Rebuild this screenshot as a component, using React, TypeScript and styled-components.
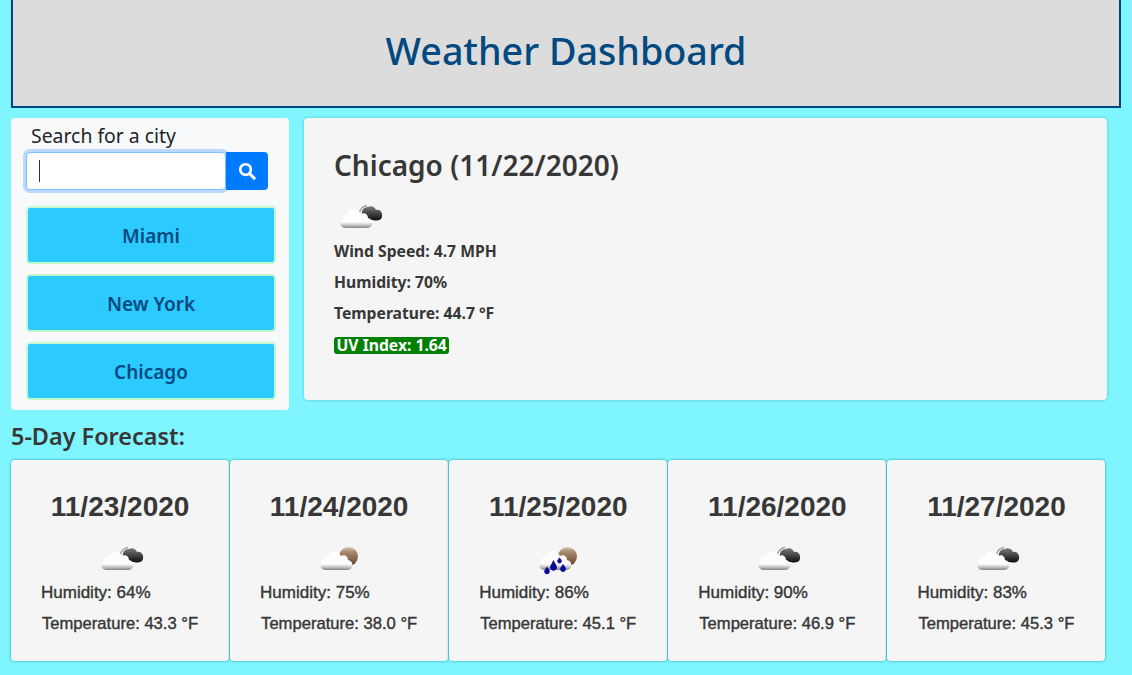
import styled, { createGlobalStyle } from 'styled-components'

const GlobalStyle = createGlobalStyle`
  html, body {
    margin: 0;
    padding: 0;
    background: #7ff5ff;
    color: #373737;
    font-family: "Noto Sans", "Open Sans", sans-serif;
    overflow: hidden;
  }
`

type IconKind = 'cloudy' | 'sun' | 'rain'

const WeatherIcon = ({ kind, uid }: { kind: IconKind; uid: string }) => {
  return (
    <svg width="50" height="50" viewBox="0 0 50 50">
      <defs>
        <linearGradient id={`${uid}-cloud`} x1="0" y1="0" x2="0" y2="1">
          <stop offset="0" stopColor="#ffffff" />
          <stop offset="0.68" stopColor="#fdfdfd" />
          <stop offset="0.84" stopColor="#c8c8c8" />
          <stop offset="1" stopColor="#828282" />
        </linearGradient>
        <linearGradient id={`${uid}-dark`} x1="0" y1="0" x2="0" y2="1">
          <stop offset="0" stopColor="#7a7a7a" />
          <stop offset="1" stopColor="#0e0e0e" />
        </linearGradient>
        <linearGradient id={`${uid}-sun`} x1="0" y1="0" x2="0" y2="1">
          <stop offset="0" stopColor="#d9c8b6" />
          <stop offset="0.25" stopColor="#a88a6e" />
          <stop offset="0.6" stopColor="#8a6a4e" />
          <stop offset="1" stopColor="#5f4128" />
        </linearGradient>
      </defs>
      {kind === 'cloudy' && (
        <>
          <path
            d="M28 22 C27 16 29 12 34 12 C37 10 41 12 42 15 C46 14 49 18 48 22 C47 26 42 26 39 25 L32 25 Z"
            fill={`url(#${uid}-dark)`}
          />
          <path d="M25 19 C26 14 29 11 33 10.500" fill="none" stroke="#a0a0a0" strokeWidth="1.400" />
        </>
      )}
      {kind !== 'cloudy' && <circle cx="34.500" cy="19.500" r="9.500" fill={`url(#${uid}-sun)`} />}
      <path
        d="M12 33 C6 33 5 27 8 25 C8 21 11 19 14 20 C15 13 24 12 27 19 C30 17 34 19 34 23 C38 24 39 27 38 30 C37 32 35 33 33 33 Z"
        fill={`url(#${uid}-cloud)`}
      />
      {kind === 'rain' && (
        <g fill="#0a0a9a">
          <path d="M20.500 23 L23.400 28.500 A3.400 3.400 0 1 1 17.600 28.500 Z" />
          <path d="M14 29.500 L16.400 33 A2.800 2.800 0 1 1 11.600 33 Z" />
          <path d="M26.500 20.500 L28.500 23 A2.300 2.300 0 1 1 24.500 23 Z" />
          <path d="M30 27 L32.500 30.500 A2.900 2.900 0 1 1 27.500 30.500 Z" />
        </g>
      )}
    </svg>
  )
}

const App = () => {
  const cities = ['Miami', 'New York', 'Chicago']
  const days = [
    { date: '11/23/2020', icon: 'cloudy' as IconKind, humidity: '64%', temp: '43.3 °F' },
    { date: '11/24/2020', icon: 'sun' as IconKind, humidity: '75%', temp: '38.0 °F' },
    { date: '11/25/2020', icon: 'rain' as IconKind, humidity: '86%', temp: '45.1 °F' },
    { date: '11/26/2020', icon: 'cloudy' as IconKind, humidity: '90%', temp: '46.9 °F' },
    { date: '11/27/2020', icon: 'cloudy' as IconKind, humidity: '83%', temp: '45.3 °F' },
  ]
  return (
    <Page>
      <GlobalStyle />
      <Header>
        <Title>Weather Dashboard</Title>
      </Header>
      <TopRow>
        <SidePanel>
          <SearchLabel>Search for a city</SearchLabel>
          <SearchRow>
            <SearchInput>
              <Caret />
            </SearchInput>
            <SearchButton aria-label="Search">
              <svg width="18" height="18" viewBox="0 0 16 16" fill="none" stroke="#fff">
                <circle cx="6.700" cy="6.700" r="4.700" strokeWidth="2.400" />
                <path d="M10.300 10.300 L14.300 14.300" strokeWidth="2.800" strokeLinecap="round" />
              </svg>
            </SearchButton>
          </SearchRow>
          <CityList>
            {cities.map((city) => (
              <CityButton key={city}>{city}</CityButton>
            ))}
          </CityList>
        </SidePanel>
        <CurrentPanel>
          <CityTitle>Chicago (11/22/2020)</CityTitle>
          <CurrentIcon>
            <WeatherIcon kind="cloudy" uid="current" />
          </CurrentIcon>
          <Stat>Wind Speed: 4.7 MPH</Stat>
          <Stat>Humidity: 70%</Stat>
          <Stat>Temperature: 44.7 °F</Stat>
          <UvBadge>UV Index: 1.64</UvBadge>
        </CurrentPanel>
      </TopRow>
      <ForecastTitle>5-Day Forecast:</ForecastTitle>
      <ForecastRow>
        {days.map((day) => (
          <DayCard key={day.date}>
            <DayDate>{day.date}</DayDate>
            <DayIcon>
              <WeatherIcon kind={day.icon} uid={day.date} />
            </DayIcon>
            <DayHumidity>Humidity: {day.humidity}</DayHumidity>
            <DayTemp>Temperature: {day.temp}</DayTemp>
          </DayCard>
        ))}
      </ForecastRow>
    </Page>
  )
}

const Page = styled.div`
  width: 1132px;
  height: 675px;
  padding: 0 11px;
  box-sizing: border-box;
`
const Header = styled.header`
  width: 1110px;
  height: 108px;
  box-sizing: border-box;
  background: #dcdcdc;
  border: 2px solid #03467f;
  border-top: none;
  display: flex;
  align-items: center;
  justify-content: center;
  padding-bottom: 5px;
`
const Title = styled.h1`
  margin: 0;
  font-size: 37.7px;
  font-weight: 500;
  color: #03497f;
`
const TopRow = styled.div`
  display: flex;
  align-items: flex-start;
  gap: 15px;
  margin-top: 10px;
`
const SidePanel = styled.aside`
  width: 278px;
  height: 292px;
  box-sizing: border-box;
  background: #f8f9fa;
  border-radius: 4px;
  padding: 5px 14px 0 15px;
`
const SearchLabel = styled.div`
  font-size: 19.4px;
  line-height: 26px;
  color: #212529;
  padding-left: 5px;
`
const SearchRow = styled.div`
  display: flex;
  margin-top: 3px;
`
const SearchInput = styled.div`
  width: 200px;
  height: 38px;
  box-sizing: border-box;
  background: #fff;
  border: 1px solid #80bdff;
  border-radius: 4px;
  box-shadow: 0 0 0 3px rgba(0, 123, 255, 0.25);
  display: flex;
  align-items: center;
  padding-left: 12px;
`
const Caret = styled.span`
  width: 1px;
  height: 22px;
  background: #333;
`
const SearchButton = styled.button`
  width: 42px;
  height: 38px;
  border: none;
  padding: 0;
  background: #007bff;
  border-radius: 0 4px 4px 0;
  display: flex;
  align-items: center;
  justify-content: center;
`
const CityList = styled.div`
  display: flex;
  flex-direction: column;
  gap: 10px;
  margin-top: 16px;
`
const CityButton = styled.button`
  width: 250px;
  height: 58px;
  box-sizing: border-box;
  background: #2ccbff;
  border: 2px solid #c4f9cf;
  border-radius: 4px;
  color: #03497f;
  font-family: inherit;
  font-size: 19px;
  font-weight: 600;
  padding: 2px 0 0;
`
const CurrentPanel = styled.section`
  width: 803px;
  height: 282px;
  box-sizing: border-box;
  background: #f5f5f5;
  border-radius: 4px;
  box-shadow: 0 0 3px rgba(0, 120, 140, 0.4);
  padding: 28px 30px 0;
`
const CityTitle = styled.h2`
  margin: 0;
  font-size: 28px;
  line-height: 38px;
  font-weight: 600;
  color: #373737;
`
const CurrentIcon = styled.div`
  height: 50px;
  margin-top: 11px;
  margin-bottom: -4px;
`
const Stat = styled.div`
  font-size: 15.7px;
  font-weight: 700;
  line-height: 21px;
  margin-bottom: 10px;
  color: #373737;
`
const UvBadge = styled.div`
  display: inline-block;
  font-size: 15.7px;
  font-weight: 700;
  line-height: 17px;
  padding: 0 2.5px;
  border-radius: 3px;
  background: #008000;
  color: #fff;
`
const ForecastTitle = styled.h3`
  margin: 13px 0 10px;
  font-size: 23.4px;
  line-height: 27px;
  font-weight: 600;
  color: #373737;
`
const ForecastRow = styled.div`
  display: flex;
  gap: 1px;
`
const DayCard = styled.article`
  width: 218.1px;
  height: 201px;
  box-sizing: border-box;
  background: #f5f5f5;
  border-radius: 4px;
  box-shadow: 0 0 2px 1px rgba(0, 130, 150, 0.35);
  font-family: "Liberation Sans", Arial, sans-serif;
  display: flex;
  flex-direction: column;
  align-items: center;
  padding-top: 32px;
`
const DayDate = styled.div`
  font-size: 28px;
  line-height: 30px;
  font-weight: 700;
  color: #373737;
`
const DayIcon = styled.div`
  height: 50px;
  width: 50px;
  margin-top: 15px;
  margin-bottom: -5px;
`
const DayHumidity = styled.div`
  font-size: 17px;
  line-height: 21px;
  color: #373737;
  -webkit-text-stroke: 0.4px #373737;
  align-self: flex-start;
  padding-left: 30px;
`
const DayTemp = styled.div`
  font-size: 16.6px;
  line-height: 21px;
  margin-top: 10px;
  color: #373737;
  -webkit-text-stroke: 0.4px #373737;
  align-self: flex-start;
  padding-left: 31px;
`

export default App
